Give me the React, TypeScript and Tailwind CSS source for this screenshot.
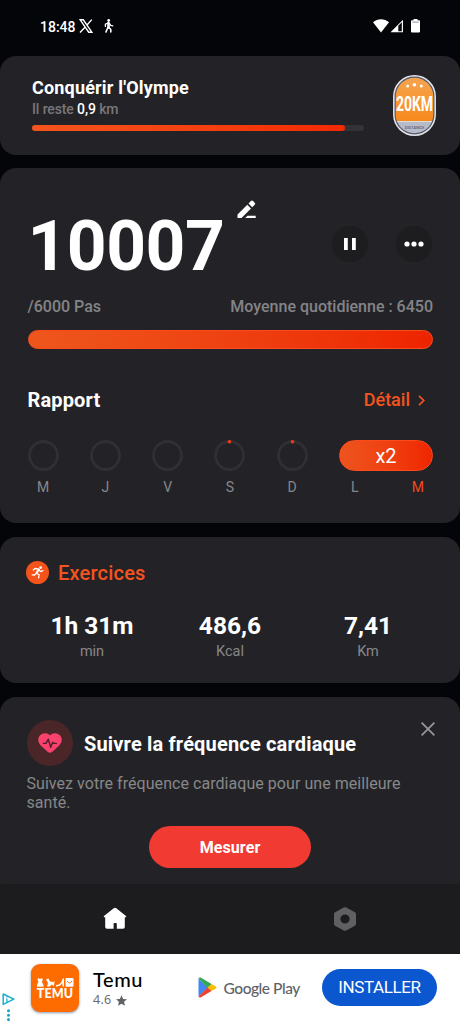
import { ReactNode } from "react";
import clsx from "clsx";

type Day = {
  label: string;
  started: boolean;
};

type Stat = {
  value: string;
  unit: string;
};

const days: Day[] = [
  { label: "M", started: false },
  { label: "J", started: false },
  { label: "V", started: false },
  { label: "S", started: true },
  { label: "D", started: true },
];

const stats: Stat[] = [
  { value: "1h 31m", unit: "min" },
  { value: "486,6", unit: "Kcal" },
  { value: "7,41", unit: "Km" },
];

function Card({ className, children }: { className?: string; children: ReactNode }) {
  return <section className={clsx("shrink-0 rounded-2xl bg-[#232327]", className)}>{children}</section>;
}

function StatusBar() {
  return (
    <header className="flex h-14 shrink-0 items-center justify-between pl-[40px] pr-[40px] pb-[4px]">
      <div className="flex items-center">
        <span className="w-[35px] pt-[2px] text-[14px] font-medium leading-none">18:48</span>
        <svg className="ml-[4px] h-[14px] w-[14px]" viewBox="0 0 14 14" fill="none" stroke="#fff">
          <path d="M1.200.8h3.100l8.500 12.400H9.700z" strokeWidth="1.400" />
          <path d="M12.800.6 8 6M6 8.200 1 13.400" strokeWidth="1.400" />
        </svg>
        <svg className="ml-[11px] h-[14px] w-[10px]" viewBox="0 0 10 14" fill="none" stroke="#fff" strokeLinecap="round">
          <circle cx="4.700" cy="1.500" r="1.400" fill="#fff" stroke="none" />
          <path d="M4.500 4v4.500" strokeWidth="2.600" />
          <path d="M4 4 1.400 5.200V7.400M5.500 4.600 6.800 6.400l1.900.5" strokeWidth="1.300" />
          <path d="M3.800 8.500 2 13M5 8.500l1.800 2V13" strokeWidth="1.600" />
        </svg>
      </div>
      <div className="flex items-center">
        <svg className="h-[14px] w-[16px]" viewBox="0 0 16 14">
          <path d="M0 3.200C4.600-.7 11.400-.7 16 3.200L8 13.400z" fill="#fff" />
        </svg>
        <svg className="ml-[1px] h-[14px] w-[14px]" viewBox="0 0 14 14">
          <path d="M.5 13.300 13 .8v12.500z" fill="#fff" />
          <path d="M8.300 6.700 11.800 3.200v9H8.300z" fill="#08090c" />
        </svg>
        <svg className="ml-[7px] h-[14px] w-[9px]" viewBox="0 0 9 14">
          <path d="M2.500 0h4v1.200H8q1 0 1 1V12.500q0 1-1 1H1q-1 0-1-1V2.200q0-1 1-1h1.500z" fill="#fff" />
          <path d="M1.300 3.100h6.400" stroke="#777" strokeWidth=".8" />
        </svg>
      </div>
    </header>
  );
}

function DistanceBadge() {
  return (
    <svg className="h-[61px] w-[43px]" viewBox="0 0 43 61">
      <defs>
        <linearGradient id="badge" x1="0" y1="0" x2="0" y2="1">
          <stop offset="0" stopColor="#f5a552" />
          <stop offset="1" stopColor="#f78a1d" />
        </linearGradient>
        <clipPath id="badge-clip">
          <rect x="2.700" y="2.700" width="37.600" height="55.600" rx="18.800" />
        </clipPath>
      </defs>
      <rect x=".8" y=".8" width="41.400" height="59.400" rx="20.700" fill="#53586a" stroke="#e4e5ec" strokeWidth="1.500" />
      <g clipPath="url(#badge-clip)">
        <rect width="43" height="46" fill="url(#badge)" />
        <rect y="46.500" width="43" height="15" fill="#b7bac8" />
        <rect y="46" width="43" height="1" fill="#e0dcdc" />
      </g>
      <circle cx="14.700" cy="11" r="1.500" fill="#fff" />
      <circle cx="21.400" cy="9.800" r="1.800" fill="#fff" />
      <circle cx="28.300" cy="11" r="1.500" fill="#fff" />
      <text transform="translate(21.500 35.500) scale(.7 1)" textAnchor="middle" fontFamily="Roboto, sans-serif" fontWeight="700" fontSize="20" fill="#fff">
        20KM
      </text>
      <text x="21.500" y="53.500" textAnchor="middle" fontFamily="Roboto, sans-serif" fontWeight="500" fontSize="4.200" fill="#5d6070">
        DISTANCE
      </text>
    </svg>
  );
}

function ChallengeCard() {
  return (
    <Card className="flex h-[98.500px] justify-between pl-8 pr-6 pt-[19px]">
      <div className="w-[332px]">
        <h2 className="h-[26px] text-[18px] font-bold leading-[26px] tracking-[0.180px] whitespace-nowrap">
          Conquérir l'Olympe
        </h2>
        <p className="h-[18px] -mt-[1px] text-[14px] font-medium leading-[18px] tracking-[-0.120px] text-[#77777b]">
          Il reste <span className="text-white">0,9</span> km
        </p>
        <div className="mt-[6.500px] h-[6px] rounded-[3px] bg-[#333336]">
          <div className="h-full w-[313px] rounded-[3px] bg-gradient-to-r from-[#f4541c] to-[#f32800]" />
        </div>
      </div>
      <DistanceBadge />
    </Card>
  );
}

function ReportRing({ day }: { day: Day }) {
  return (
    <div className="flex w-[31px] flex-col items-center">
      <svg className="h-[31px] w-[31px]" viewBox="0 0 31 31">
        <circle cx="15.500" cy="15.500" r="14" fill="none" stroke="#303034" strokeWidth="2.800" />
        {day.started && <circle cx="15.500" cy="1.800" r="1.800" fill="#f5381b" />}
      </svg>
      <span className="mt-[6px] text-[14px] leading-5 text-[#87878a]">{day.label}</span>
    </div>
  );
}

function StepsCard() {
  return (
    <Card className="mt-[13.500px] h-[355px] pl-[27.500px] pr-[27px] pt-8">
      <div className="flex h-[91px] items-start">
        <span className="w-[200px] pt-[6px] text-[69.500px] font-bold leading-[82px] tracking-[-0.500px]">10007</span>
        <svg className="ml-[9px] h-[19px] w-[19px]" viewBox="0 0 19 19" fill="#fff">
          <path d="M.5 14.500 10.300 4.700l3.700 3.700L4.500 18H.5zM11.500 3.500l2.400-2.400q1.100-1 2.200 0l1.600 1.600q1 1.100 0 2.100l-2.500 2.400z" />
          <path d="M10.500 15.700H18.700V18H8.200z" />
        </svg>
        <div className="ml-auto mr-[1px] mt-[26px] flex gap-7">
          <button className="flex h-9 w-9 items-center justify-center rounded-full bg-[#1d1d1f]">
            <svg className="h-3 w-3" viewBox="0 0 12 12" fill="#fff">
              <path d="M0 0h3.800v12H0zM8 0h3.800v12H8z" />
            </svg>
          </button>
          <button className="flex h-9 w-9 items-center justify-center rounded-full bg-[#1d1d1f]">
            <svg className="h-[6px] w-5" viewBox="0 0 20 6" fill="#fff">
              <circle cx="3" cy="3" r="2.600" />
              <circle cx="10" cy="3" r="2.600" />
              <circle cx="17" cy="3" r="2.600" />
            </svg>
          </button>
        </div>
      </div>
      <div className="mt-[6px] flex justify-between text-[16px] font-medium leading-5 text-[#848487]">
        <span>/6000 Pas</span>
        <span>Moyenne quotidienne : 6450</span>
      </div>
      <div className="mt-[13px] h-[19px] rounded-full border border-[#fb4a1c] bg-gradient-to-r from-[#ee561d] to-[#ee2300]" />
      <div className="mt-[39px] flex h-6 items-center justify-between">
        <h2 className="text-[20px] font-bold leading-6 tracking-[0.150px]">Rapport</h2>
        <a className="flex items-center pr-2 text-[18px] font-medium leading-6 text-[#f5531f]">
          Détail
          <svg className="ml-2 h-[11px] w-[7px]" viewBox="0 0 7 11" fill="none" stroke="#f5531f" strokeWidth="1.700">
            <path d="M1 .8 5.800 5.500 1 10.200" />
          </svg>
        </a>
      </div>
      <div className="mt-[28px] flex justify-between">
        {days.map((day) => (
          <ReportRing key={day.label} day={day} />
        ))}
        <div className="w-[94px]">
          <div className="flex h-[31px] items-center justify-center rounded-full border border-[#fb4a1c] bg-gradient-to-r from-[#ee541d] to-[#f02500] text-[20px]">
            x2
          </div>
          <div className="mt-[6px] flex justify-between pl-[12px] pr-[9px] text-[14px] leading-5">
            <span className="text-[#87878a]">L</span>
            <span className="text-[#f5481f]">M</span>
          </div>
        </div>
      </div>
    </Card>
  );
}

function ExerciseCard() {
  return (
    <Card className="mt-[14px] h-[146px] px-[23px] pt-6">
      <div className="flex h-[23px] items-center pl-[3px]">
        <svg className="h-[23px] w-[23px]" viewBox="0 0 23 23">
          <circle cx="11.500" cy="11.500" r="11.500" fill="#f4541c" />
          <circle cx="14.600" cy="6.600" r="1.300" fill="#fff" />
          <g fill="none" stroke="#fff" strokeLinecap="round" strokeLinejoin="round">
            <path d="M12.800 8.500 10.500 12" strokeWidth="2.200" />
            <path d="M11.800 8 9 7.500 7.300 9M13.200 9.400l1.500 1.200 2.200-1M10.500 12.200l2.700 1.600-.6 3M9.800 12.600 8.600 14 6.200 13.800" strokeWidth="1.300" />
          </g>
        </svg>
        <h2 className="ml-[9px] pt-[1px] text-[20px] font-medium leading-6 tracking-[0.200px] text-[#f5531f]">Exercices</h2>
      </div>
      <div className="mt-[26px] grid grid-cols-3 text-center">
        {stats.map((stat) => (
          <div key={stat.unit}>
            <p className="text-[24.500px] font-bold leading-8">{stat.value}</p>
            <p className="text-[14.500px] leading-5 text-[#87878a]">{stat.unit}</p>
          </div>
        ))}
      </div>
    </Card>
  );
}

function HeartRateCard() {
  return (
    <Card className="mt-[14px] h-[200px] pl-[26.500px] pr-[25px] pt-[23px]">
      <div className="flex items-start">
        <div className="flex h-[46px] w-[46px] items-center justify-center rounded-full bg-[#4b2628]">
          <svg className="h-5 w-6" viewBox="0 0 24 20">
            <path d="M12 2.600C9.600-.5 4.800-.4 2.100 2.300-.6 5.200-.2 9.200 2.500 12.200L9.600 18.700Q12 20.600 14.400 18.700L21.500 12.200C24.200 9.200 24.600 5.200 21.900 2.300 19.200-.4 14.400-.5 12 2.600z" fill="#fb426c" />
            <path d="M5.300 10.400H8L10.300 6.200 12.700 14.300 14.600 9.400 16 10.400H18.300" fill="none" stroke="#4b2028" strokeWidth="1.400" strokeLinecap="round" strokeLinejoin="round" />
          </svg>
        </div>
        <h2 className="ml-[11.500px] mt-3 text-[20px] font-bold leading-6 tracking-[0.170px] whitespace-nowrap">
          Suivre la fréquence cardiaque
        </h2>
        <svg className="ml-auto mt-[2px] h-[14px] w-[14px]" viewBox="0 0 14 14" stroke="#98989b" strokeWidth="1.700">
          <path d="M.6.600 13.400 13.400M13.400.600.600 13.400" />
        </svg>
      </div>
      <p className="mt-[8px] text-[16px] leading-[19px] tracking-[0.050px] text-[#87878a]">
        Suivez votre fréquence cardiaque pour une meilleure santé.
      </p>
      <button className="ml-[122.500px] mt-[14px] block h-[42px] w-[162px] rounded-full bg-[#f13a32] pt-[2px] text-[16px] font-bold tracking-[0.100px]">
        Mesurer
      </button>
    </Card>
  );
}

function TabBar() {
  return (
    <nav className="grid h-[70px] shrink-0 grid-cols-2 items-center justify-items-center bg-[#1c1c1e]">
      <svg className="h-6 w-6" viewBox="0 0 24 24">
        <path d="M10.700 1.200Q12 .1 13.300 1.200L23 8.900Q23.800 10 22.600 10.200H21.800V20Q21.800 21.800 20 21.800H13.800V17Q13.800 16 12.800 16H11.600Q10.600 16 10.600 17V21.800H4Q2.200 21.800 2.200 20V10.200H1.400Q.2 10 1 8.900z" fill="#fff" />
      </svg>
      <svg className="h-6 w-6" viewBox="0 0 24 24">
        <path d="M10.800.5Q12-.2 13.200.5L22 5.300Q23 6 23 7.200V16.800Q23 18 22 18.700L13.200 23.500Q12 24.200 10.800 23.500L2 18.700Q1 18 1 16.800V7.200Q1 6 2 5.300zM12 7.400a4.600 4.600 0 1 0 0 9.200 4.600 4.600 0 0 0 0-9.200z" fill="#606062" fillRule="evenodd" />
      </svg>
    </nav>
  );
}

function AdBanner() {
  return (
    <aside className="flex h-[70px] shrink-0 items-start bg-white text-black">
      <svg className="ml-[2px] mt-[39px] h-[29px] w-[13px]" viewBox="0 0 13 29">
        <path d="M1.200 1v10.400L11.800 6.200z" fill="none" stroke="#1aaed0" strokeWidth="1.500" strokeLinejoin="round" />
        <path d="M4.900 5.400v3.600M4.900 3.400v1" stroke="#1aaed0" strokeWidth="1.300" />
        <g fill="#12a5c4">
          <circle cx="6.500" cy="17.800" r="1.500" />
          <circle cx="6.500" cy="22.200" r="1.500" />
          <circle cx="6.500" cy="26.600" r="1.500" />
        </g>
      </svg>
      <div className="ml-[16px] mt-[10px] flex h-12 w-12 flex-col items-center rounded-[9px] bg-[#fe6c00] pt-[14px] shadow-sm shadow-gray-400">
        <svg className="h-[9px] w-[37px] shrink-0" viewBox="0 0 37 9" fill="#fff">
          <path d="M1 0 3 1 5 0 5.800 2 4.800 3.800 6.500 7V8.700H0V7L1.500 3.800.5 2zM9 1.500 11.500.5 13 3.500 16.500 4 17.500 3 17 8.500 15 6.500 12.500 8.500 10 8.500 11 5zM19 7Q24 7 25.500 1L27 0V8.500H25.500V5Q23 8.500 19 8.500z" />
          <path d="M29.500 0h6q1 0 1 1v6.700q0 1-1 1h-6q-1 0-1-1V1q0-1 1-1z" />
          <path d="M30 3Q32.500 7 35 3" fill="none" stroke="#fe6c00" strokeWidth="1" />
        </svg>
        <span className="mt-[-1px] font-[Lato,sans-serif] text-[12.500px] font-black leading-4 tracking-[0.100px] text-white">
          TEMU
        </span>
      </div>
      <div className="ml-[14px] mt-[13px] w-[80px]">
        <p className="font-[Lato,sans-serif] text-[20px] font-medium leading-6 tracking-[0.600px]">Temu</p>
        <p className="flex items-center font-['Open_Sans',sans-serif] text-[12.500px] leading-[18px] tracking-[0.300px] text-[#666]">
          4.6
          <svg className="ml-[5px] h-[11px] w-[11px]" viewBox="0 0 24 23" fill="#5f6368">
            <path d="M12 0 15.600 8.200 24 8.800 17.600 14.400 19.500 23 12 18.400 4.500 23 6.400 14.400 0 8.800 8.400 8.200z" />
          </svg>
        </p>
      </div>
      <div className="ml-[25px] mt-[23px] flex h-[21px] items-center">
        <svg className="h-[21px] w-[19px]" viewBox="0 0 19 21">
          <path d="M.5 1.500V19.500L10 10.500z" fill="#4285f4" />
          <path d="M.5 1.500Q1 0 2.600.6L14 7.200 9.600 10.800z" fill="#34a853" />
          <path d="M.5 19.500Q1 21 2.600 20.400L14 13.800 9.600 10.200z" fill="#ea4335" />
          <path d="M13.400 6.900 18 9.500Q19 10.500 18 11.500L13.400 14.100 9.500 10.500z" fill="#fbbc04" />
        </svg>
        <span className="ml-[6.500px] font-[Lato,sans-serif] text-[15.500px] font-medium leading-5 tracking-[-0.450px] text-[#5f6368] whitespace-nowrap">
          Google Play
        </span>
      </div>
      <button className="ml-auto mr-[23px] mt-[15px] h-[37px] w-[115px] rounded-full bg-[#0b57d0] text-[17px] tracking-[-0.400px] text-white">
        INSTALLER
      </button>
    </aside>
  );
}

export default function App() {
  return (
    <div className="flex h-[1024px] w-[460px] flex-col overflow-hidden bg-[#040509] font-[Roboto,sans-serif] text-white">
      <StatusBar />
      <main className="flex min-h-0 flex-1 flex-col overflow-hidden">
        <ChallengeCard />
        <StepsCard />
        <ExerciseCard />
        <HeartRateCard />
      </main>
      <TabBar />
      <AdBanner />
    </div>
  );
}
